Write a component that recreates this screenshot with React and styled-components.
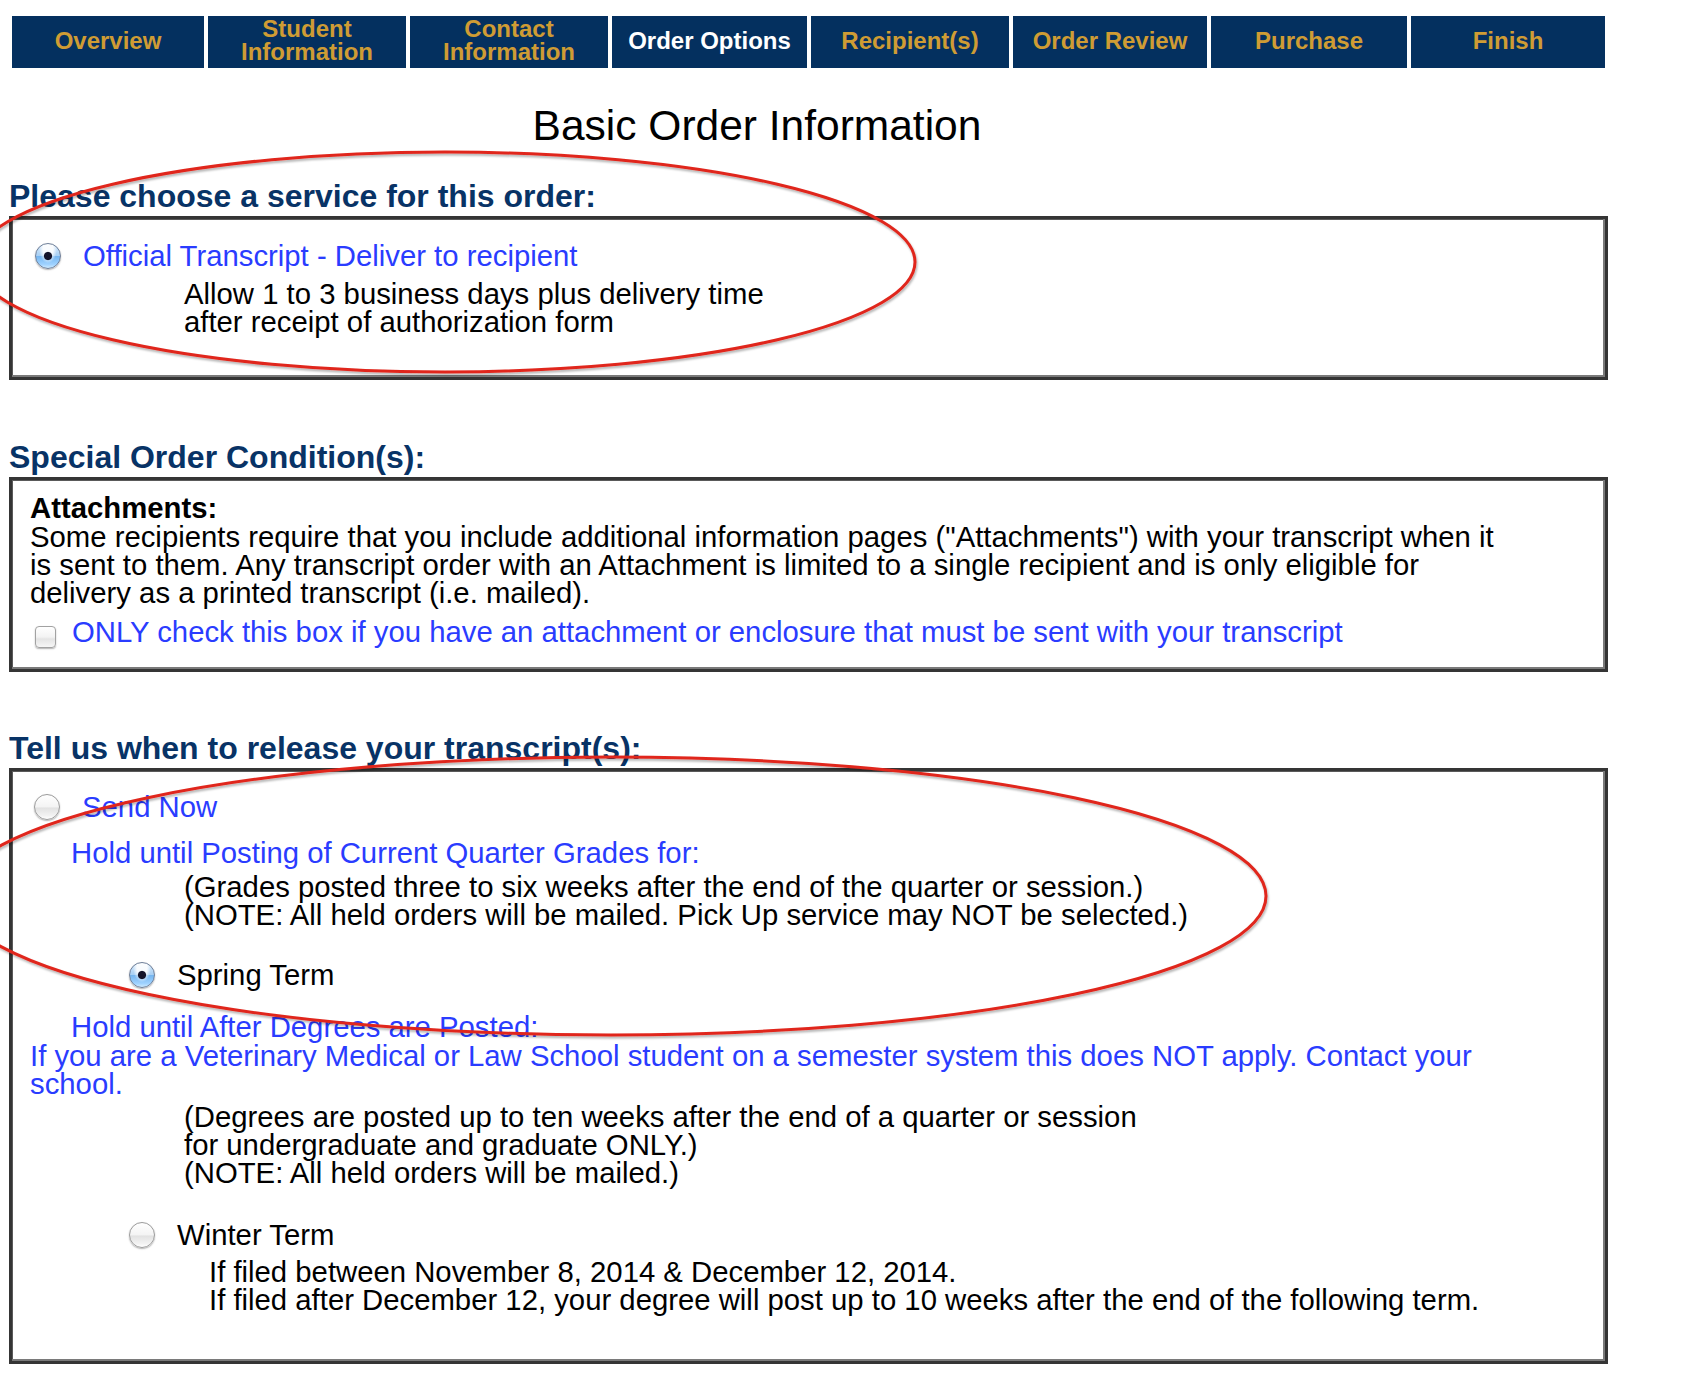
import React from "react";
import styled, { createGlobalStyle, css } from "styled-components";

const GlobalStyle = createGlobalStyle`
  html, body {
    margin: 0;
    padding: 0;
    background: #ffffff;
  }
  body {
    font-family: "Liberation Sans", Arial, Helvetica, sans-serif;
    color: #000;
  }
`;

const NAVY = "#04305f";
const GOLD = "#cf9c34";
const BLUE = "#2a3cff";
const HEAD = "#083366";

const Page = styled.div`
  position: relative;
  width: 1682px;
  min-height: 1386px;
  box-sizing: border-box;
  padding: 16px 0 0 9px;
`;

const NavBar = styled.nav`
  display: grid;
  grid-template-columns: 192px 198px 198px 195px 198px 194px 196px 194px;
  column-gap: 4px;
  margin-left: 3px;
`;

const NavTab = styled.div`
  height: 52px;
  box-sizing: border-box;
  padding-bottom: 4px;
  background: ${NAVY};
  color: ${(p) => (p.$active ? "#ffffff" : GOLD)};
  display: flex;
  align-items: center;
  justify-content: center;
  text-align: center;
  font-weight: bold;
  font-size: 24px;
  line-height: 23px;
`;

const Title = styled.h1`
  width: 1496px;
  margin: 35px 0 0;
  text-align: center;
  font-weight: normal;
  font-size: 42.5px;
  line-height: 46px;
  color: #000;
`;

const SectionHeading = styled.h2`
  margin: ${(p) => p.$top}px 0 3px;
  font-size: 32px;
  line-height: 34px;
  font-weight: bold;
  color: ${HEAD};
`;

const Panel = styled.section`
  width: 1599px;
  box-sizing: border-box;
  border: 3px solid #353535;
  box-shadow: inset -2px -2px 0 #7a7a7a, inset 1px 1px 0 #5a5a5a;
  padding: ${(p) => p.$pad};
  font-size: 29.3px;
  line-height: 28px;
`;

const OptionRow = styled.label`
  display: flex;
  align-items: center;
  height: 28px;
  margin-top: ${(p) => p.$top || 0}px;
  padding-left: ${(p) => p.$indent || 0}px;
  gap: ${(p) => p.$gap || 22}px;
  color: ${(p) => (p.$blue ? BLUE : "#000")};
`;

const radioOn = css`
  background:
    radial-gradient(circle at 50% 50%, #14142a 0 3.6px, rgba(0,0,0,0) 4.6px),
    radial-gradient(ellipse at 50% 20%, rgba(255,255,255,0.9) 0 5px, rgba(255,255,255,0) 9px),
    linear-gradient(180deg, #d7e9fa 0%, #a9d0f4 48%, #76b6f0 52%, #9fd2ff 85%, #cdeaff 100%);
  border-color: #6f7f98;
`;

const radioOff = css`
  background:
    linear-gradient(180deg, #ffffff 0%, #f4f4f4 48%, #e2e2e2 55%, #f2f2f2 85%, #ffffff 100%);
  border-color: #9b9b9b;
`;

const Radio = styled.input.attrs({ type: "radio" })`
  appearance: none;
  -webkit-appearance: none;
  flex: 0 0 auto;
  width: 26px;
  height: 26px;
  margin: 0 0 0 ${(p) => p.$left || 0}px;
  border-radius: 50%;
  border: 1px solid;
  box-sizing: border-box;
  box-shadow: 0 1px 1.5px rgba(0, 0, 0, 0.3);
  ${(p) => (p.checked ? radioOn : radioOff)}
`;

const Checkbox = styled.input.attrs({ type: "checkbox" })`
  appearance: none;
  -webkit-appearance: none;
  flex: 0 0 auto;
  width: 21px;
  height: 22px;
  margin: 10px 0 0 5px;
  border-radius: 4px;
  border: 1px solid #a2a2a2;
  box-sizing: border-box;
  background: linear-gradient(180deg, #ffffff 0%, #f3f3f3 50%, #e4e4e4 60%, #f6f6f6 100%);
  box-shadow: 0 1px 1.5px rgba(0, 0, 0, 0.3);
`;

const Desc = styled.div`
  margin-top: ${(p) => p.$top || 0}px;
  padding-left: ${(p) => p.$indent || 0}px;
  color: ${(p) => (p.$blue ? BLUE : "#000")};
  max-width: ${(p) => (p.$wrap ? `${p.$wrap}px` : "none")};
`;

const Strong = styled.div`
  font-weight: bold;
`;

const Annotation = styled.svg`
  position: absolute;
  left: 0;
  top: 0;
  width: 1682px;
  height: 1386px;
  pointer-events: none;
  overflow: visible;
`;

const tabs = [
  ["Overview"],
  ["Student", "Information"],
  ["Contact", "Information"],
  ["Order Options"],
  ["Recipient(s)"],
  ["Order Review"],
  ["Purchase"],
  ["Finish"],
];

export default function App() {
  return (
    <>
      <GlobalStyle />
      <Page>
        <NavBar>
          {tabs.map((t, i) => (
            <NavTab key={i} $active={i === 3}>
              <span>
                {t.map((line, j) => (
                  <React.Fragment key={j}>
                    {j > 0 && <br />}
                    {line}
                  </React.Fragment>
                ))}
              </span>
            </NavTab>
          ))}
        </NavBar>

        <Title>Basic Order Information</Title>

        <SectionHeading $top={30}>Please choose a service for this order:</SectionHeading>
        <Panel $pad="23px 0 41px 18px">
          <OptionRow $blue>
            <Radio name="service" checked readOnly $left={5} />
            Official Transcript - Deliver to recipient
          </OptionRow>
          <Desc $top={10} $indent={154}>
            Allow 1 to 3 business days plus delivery time
            <br />
            after receipt of authorization form
          </Desc>
        </Panel>

        <SectionHeading $top={60}>Special Order Condition(s):</SectionHeading>
        <Panel $pad="14px 0 23px 18px">
          <Strong>Attachments:</Strong>
          <Desc $top={1} $wrap={1478}>
            Some recipients require that you include additional information pages ("Attachments") with
            your transcript when it is sent to them. Any transcript order with an Attachment is limited to
            a single recipient and is only eligible for delivery as a printed transcript (i.e. mailed).
          </Desc>
          <OptionRow $blue $top={11} $gap={16}>
            <Checkbox readOnly />
            ONLY check this box if you have an attachment or enclosure that must be sent with your transcript
          </OptionRow>
        </Panel>

        <SectionHeading $top={59}>Tell us when to release your transcript(s):</SectionHeading>
        <Panel $pad="22px 0 47px 18px">
          <OptionRow $blue>
            <Radio name="release" readOnly $left={4} />
            Send Now
          </OptionRow>
          <Desc $blue $top={18} $indent={41}>
            Hold until Posting of Current Quarter Grades for:
          </Desc>
          <Desc $top={6} $indent={154}>
            (Grades posted three to six weeks after the end of the quarter or session.)
            <br />
            (NOTE: All held orders will be mailed. Pick Up service may NOT be selected.)
          </Desc>
          <OptionRow $top={32}>
            <Radio name="release" checked readOnly $left={99} />
            Spring Term
          </OptionRow>
          <Desc $blue $top={24} $indent={41}>
            Hold until After Degrees are Posted:
          </Desc>
          <Desc $blue $top={1} $wrap={1478}>
            If you are a Veterinary Medical or Law School student on a semester system this does NOT
            apply. Contact your school.
          </Desc>
          <Desc $top={5} $indent={154}>
            (Degrees are posted up to ten weeks after the end of a quarter or session
            <br />
            for undergraduate and graduate ONLY.)
            <br />
            (NOTE: All held orders will be mailed.)
          </Desc>
          <OptionRow $top={34}>
            <Radio name="release" readOnly $left={99} />
            Winter Term
          </OptionRow>
          <Desc $top={9} $indent={179}>
            If filed between November 8, 2014 &amp; December 12, 2014.
            <br />
            If filed after December 12, your degree will post up to 10 weeks after the end of the following term.
          </Desc>
        </Panel>

        <Annotation viewBox="0 0 1682 1386">
          <defs>
            <filter id="penShadow" x="-10%" y="-10%" width="120%" height="120%">
              <feDropShadow dx="1" dy="2" stdDeviation="1.2" floodColor="#000" floodOpacity="0.3" />
            </filter>
          </defs>
          <g fill="none" stroke="#e0261c" strokeWidth="3" filter="url(#penShadow)">
            <ellipse cx="445" cy="262" rx="470" ry="110" />
            <ellipse cx="611" cy="896" rx="655" ry="139" />
          </g>
        </Annotation>
      </Page>
    </>
  );
}
